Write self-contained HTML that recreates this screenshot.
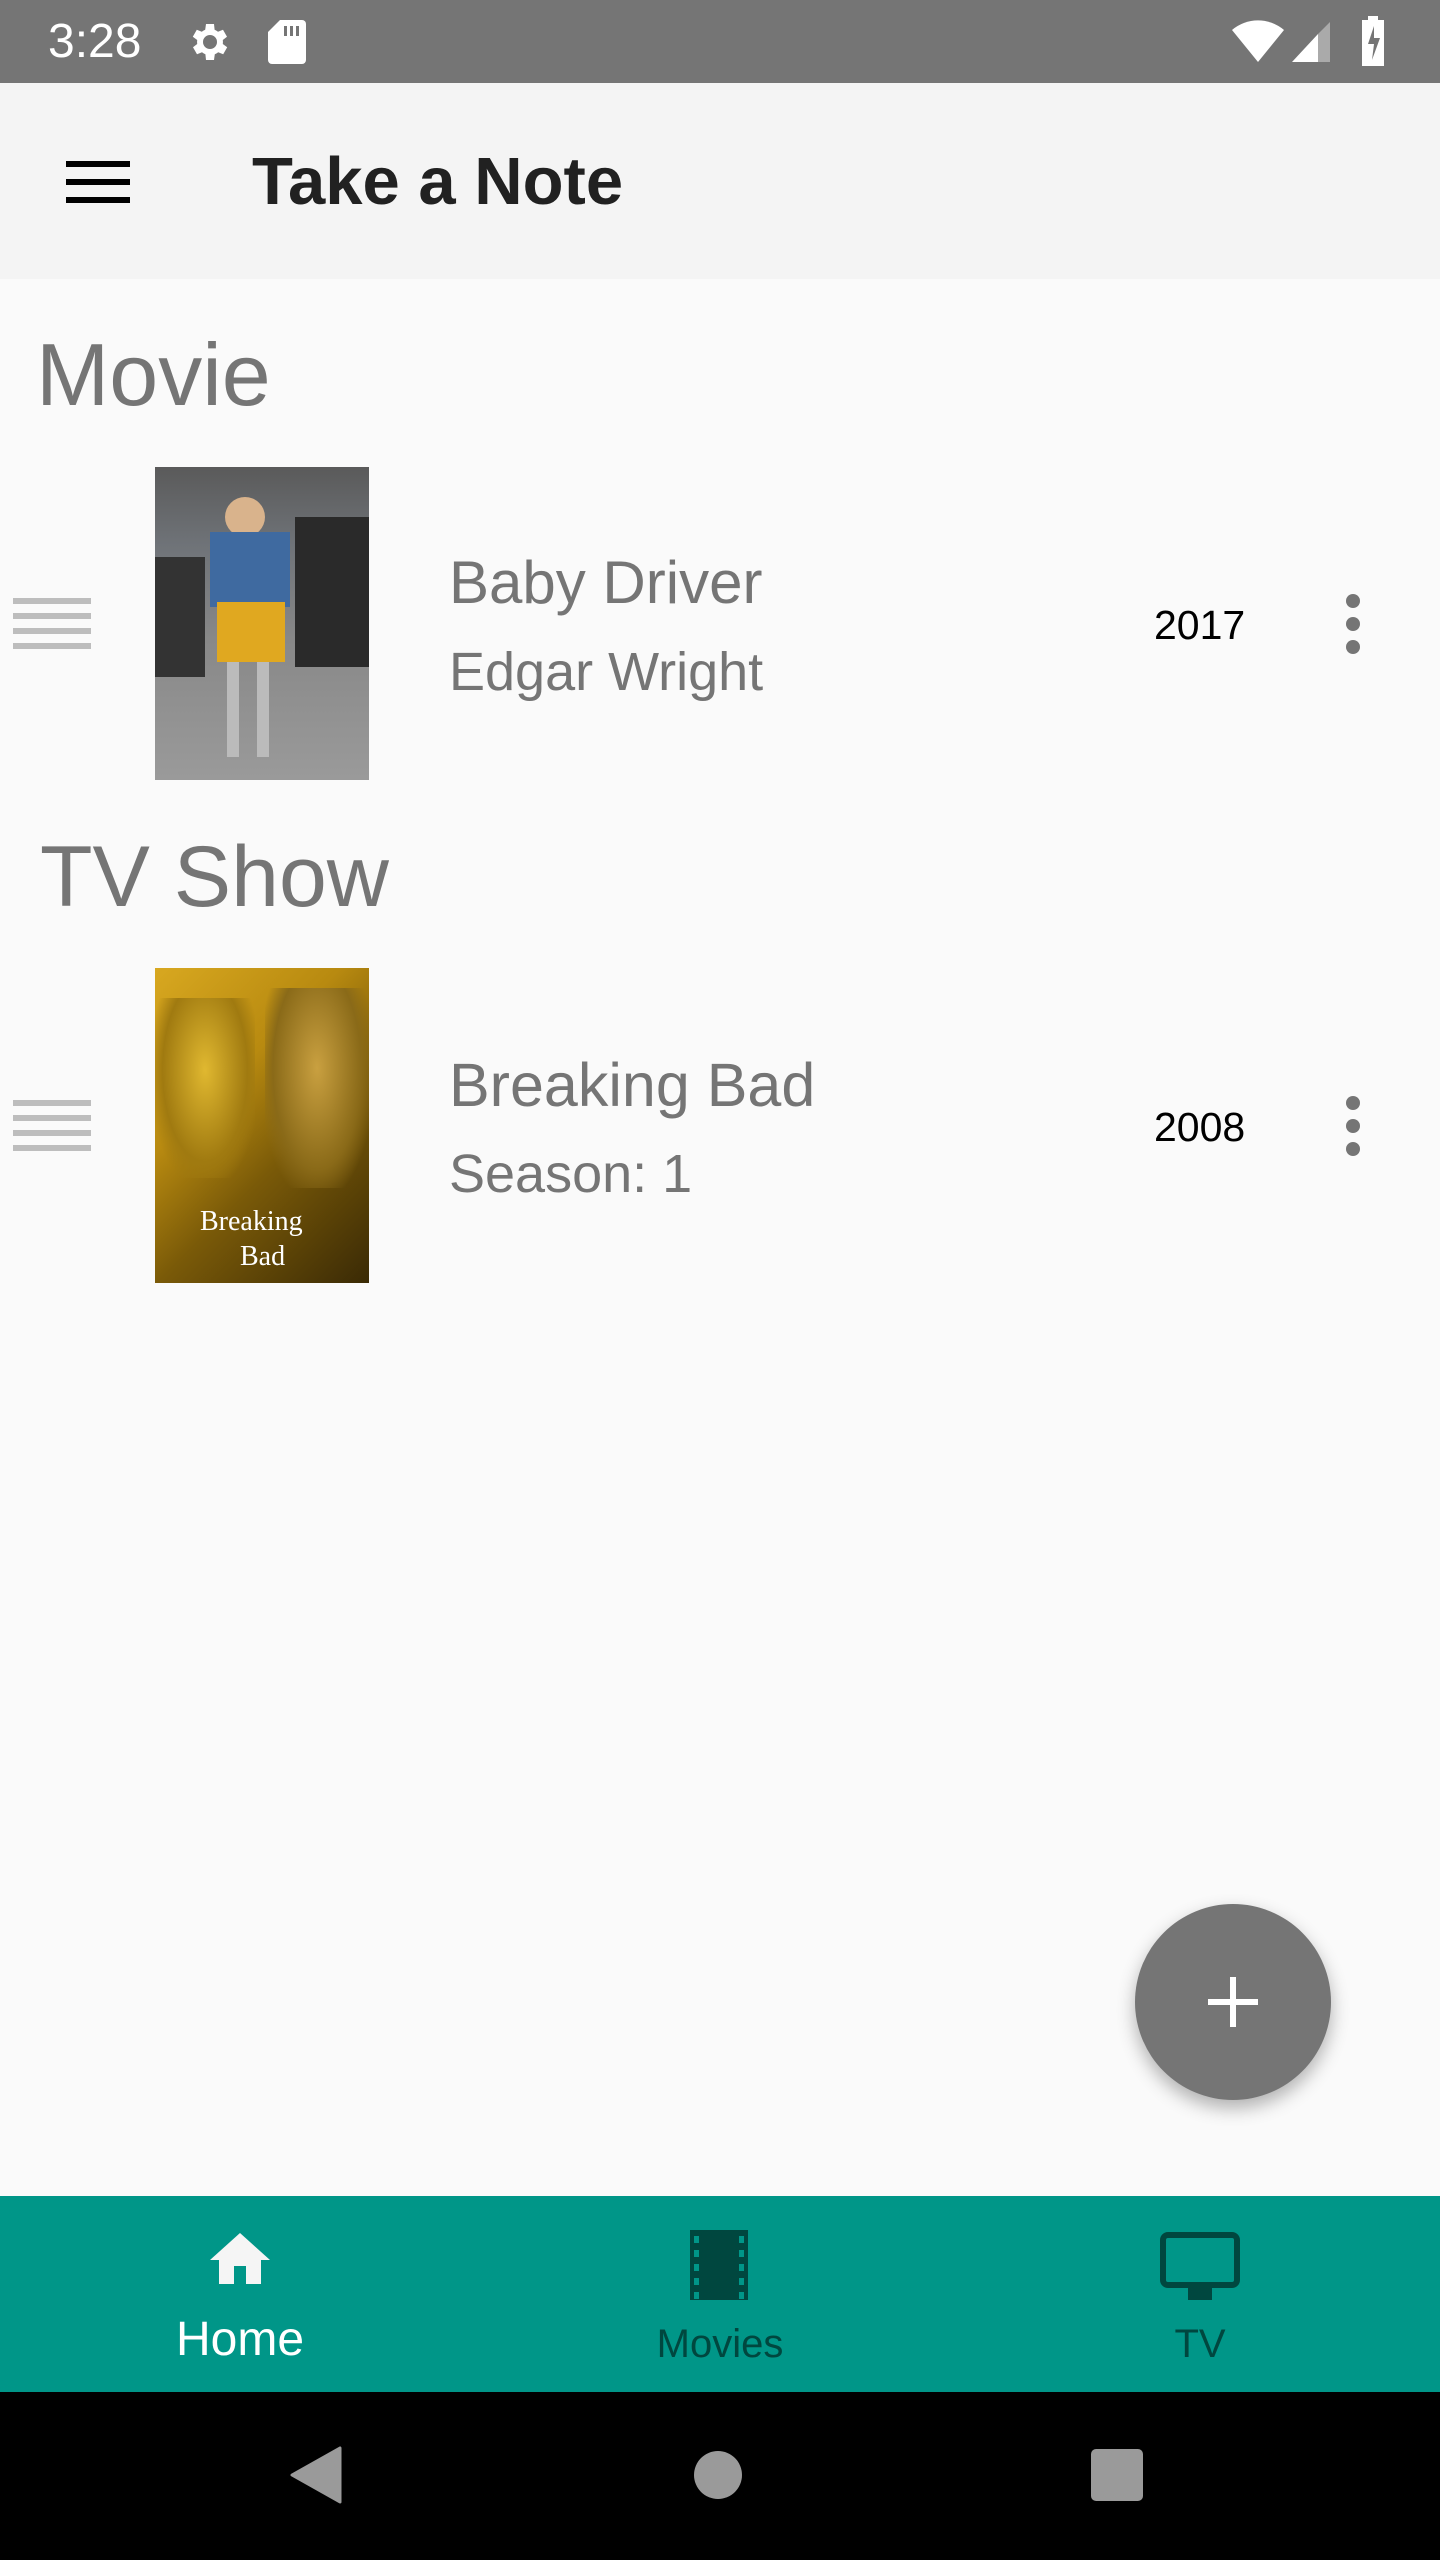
<!DOCTYPE html>
<html><head><meta charset="utf-8"><style>
*{margin:0;padding:0;box-sizing:border-box}
body{width:1440px;height:2560px;position:relative;background:#fafafa;font-family:"Liberation Sans",sans-serif;overflow:hidden}
.abs{position:absolute}
.t{white-space:nowrap;line-height:1}
</style></head><body>
<div class="abs" style="left:0;top:0;width:1440px;height:83px;background:#757575"></div>
<div class="abs t" style="left:48px;top:18px;font-size:48px;color:#fff">3:28</div>
<svg class="abs" style="left:184px;top:18px" width="48" height="48" viewBox="0 0 24 24"><path fill="#fff" d="M19.4 13a7.5 7.5 0 000-2l2.1-1.6-2-3.5-2.5 1a7 7 0 00-1.7-1L15 3h-4l-.4 2.9a7 7 0 00-1.7 1l-2.5-1-2 3.5L6.6 11a7.5 7.5 0 000 2l-2.1 1.6 2 3.5 2.5-1a7 7 0 001.7 1L11 21h4l.4-2.9a7 7 0 001.7-1l2.5 1 2-3.5zM13 15.5a3.5 3.5 0 110-7 3.5 3.5 0 010 7z"/></svg>
<svg class="abs" style="left:266px;top:18px" width="40" height="48" viewBox="0 0 20 24"><path fill="#fff" d="M7 1h11a2 2 0 012 2v18a2 2 0 01-2 2H3a2 2 0 01-2-2V7z"/><path fill="#757575" d="M9 4h1.5v5H9zM12 4h1.5v5H12zM15 4h1.5v5H15z"/></svg>
<svg class="abs" style="left:1230px;top:18px" width="56" height="48" viewBox="0 0 28 24"><path fill="#fff" d="M14 22L1 6a20 20 0 0126 0z"/></svg>
<svg class="abs" style="left:1290px;top:18px" width="44" height="48" viewBox="0 0 22 24"><path fill="#fff" d="M1 22L14 8v14z"/><path fill="#aaa" d="M14 8L20 2v20h-6z"/></svg>
<svg class="abs" style="left:1360px;top:16px" width="26" height="50" viewBox="0 0 13 25"><path fill="#fff" d="M4 0h5v2h3v23H1V2h3z"/><path fill="#757575" d="M7 5L4 14h3l-1 8 4-11H7z"/></svg>

<div class="abs" style="left:0;top:83px;width:1440px;height:196px;background:#f4f4f4"></div>
<div class="abs" style="left:66px;top:161px;width:64px;height:6px;background:#000"></div>
<div class="abs" style="left:66px;top:179px;width:64px;height:6px;background:#000"></div>
<div class="abs" style="left:66px;top:197px;width:64px;height:6px;background:#000"></div>
<div class="abs t" style="left:252px;top:148px;font-size:67px;font-weight:bold;color:#212121">Take a Note</div>

<div class="abs t" style="left:36px;top:331px;font-size:88px;color:#757575">Movie</div>
<div class="abs t" style="left:40px;top:834px;font-size:86px;color:#757575">TV Show</div>

<!-- row 1 -->
<div class="abs" style="left:13px;top:598px;width:78px;height:52px;background:repeating-linear-gradient(#bdbdbd 0 6px,transparent 6px 15px)"></div>
<div class="abs" style="left:155px;top:467px;width:214px;height:313px;background:linear-gradient(180deg,#5a5a5a 0%,#6f7378 25%,#888 55%,#9a9a9a 100%)">
<div class="abs" style="left:70px;top:30px;width:40px;height:40px;border-radius:50%;background:#d9b38c"></div>
<div class="abs" style="left:55px;top:65px;width:80px;height:75px;background:#3f6aa0"></div>
<div class="abs" style="left:62px;top:135px;width:68px;height:60px;background:#e0a820"></div>
<div class="abs" style="left:72px;top:195px;width:12px;height:95px;background:#bbb"></div>
<div class="abs" style="left:102px;top:195px;width:12px;height:95px;background:#bbb"></div>
<div class="abs" style="left:140px;top:50px;width:74px;height:150px;background:#2a2a2a"></div>
<div class="abs" style="left:0;top:90px;width:50px;height:120px;background:#333"></div>
</div>
<div class="abs t" style="left:449px;top:553px;font-size:60px;color:#757575">Baby Driver</div>
<div class="abs t" style="left:449px;top:645px;font-size:54px;color:#757575">Edgar Wright</div>
<div class="abs t" style="left:1154px;top:605px;font-size:41px;color:#000">2017</div>
<div class="abs" style="left:1346px;top:594px;width:14px;height:14px;border-radius:50%;background:#757575"></div>
<div class="abs" style="left:1346px;top:617px;width:14px;height:14px;border-radius:50%;background:#757575"></div>
<div class="abs" style="left:1346px;top:640px;width:14px;height:14px;border-radius:50%;background:#757575"></div>

<!-- row 2 -->
<div class="abs" style="left:13px;top:1100px;width:78px;height:52px;background:repeating-linear-gradient(#bdbdbd 0 6px,transparent 6px 15px)"></div>
<div class="abs" style="left:155px;top:968px;width:214px;height:315px;background:linear-gradient(135deg,#d8a820 0%,#b88a10 35%,#7a5a08 60%,#3a2a05 100%)">
<div class="abs" style="left:110px;top:20px;width:104px;height:200px;background:radial-gradient(ellipse at 50% 40%,#c9a040 0%,#8a6a18 60%,transparent 80%)"></div>
<div class="abs" style="left:0;top:30px;width:100px;height:180px;background:radial-gradient(ellipse at 50% 40%,#e0b830 0%,#a07a10 60%,transparent 80%)"></div>
<div class="abs t" style="left:45px;top:240px;font-size:28px;color:#fff;font-family:'Liberation Serif',serif">Breaking</div>
<div class="abs t" style="left:85px;top:275px;font-size:28px;color:#fff;font-family:'Liberation Serif',serif">Bad</div>
</div>
<div class="abs t" style="left:449px;top:1055px;font-size:61px;color:#757575">Breaking Bad</div>
<div class="abs t" style="left:449px;top:1147px;font-size:54px;color:#757575">Season: 1</div>
<div class="abs t" style="left:1154px;top:1107px;font-size:41px;color:#000">2008</div>
<div class="abs" style="left:1346px;top:1096px;width:14px;height:14px;border-radius:50%;background:#757575"></div>
<div class="abs" style="left:1346px;top:1119px;width:14px;height:14px;border-radius:50%;background:#757575"></div>
<div class="abs" style="left:1346px;top:1142px;width:14px;height:14px;border-radius:50%;background:#757575"></div>

<!-- FAB -->
<div class="abs" style="left:1135px;top:1904px;width:196px;height:196px;border-radius:50%;background:#757575;box-shadow:0 8px 18px rgba(0,0,0,.3)"></div>
<div class="abs" style="left:1208px;top:1999px;width:50px;height:6px;background:#fff"></div>
<div class="abs" style="left:1230px;top:1977px;width:6px;height:50px;background:#fff"></div>

<!-- bottom nav -->
<div class="abs" style="left:0;top:2196px;width:1440px;height:196px;background:#009688"></div>
<svg class="abs" style="left:204px;top:2224px" width="72" height="72" viewBox="0 0 24 24"><path fill="#f5f5f5" d="M10 20v-6h4v6h5v-8h3L12 3 2 12h3v8z"/></svg>
<div class="abs t" style="left:0;width:480px;top:2316px;text-align:center;font-size:48px;color:#fff">Home</div>
<svg class="abs" style="left:690px;top:2230px" width="58" height="70" viewBox="0 0 58 70"><path fill="#00473f" d="M0 0h58v70H0z"/><g fill="#009688"><rect x="4" y="6" width="5" height="7"/><rect x="4" y="20" width="5" height="7"/><rect x="4" y="34" width="5" height="7"/><rect x="4" y="48" width="5" height="7"/><rect x="4" y="62" width="5" height="7"/><rect x="49" y="6" width="5" height="7"/><rect x="49" y="20" width="5" height="7"/><rect x="49" y="34" width="5" height="7"/><rect x="49" y="48" width="5" height="7"/><rect x="49" y="62" width="5" height="7"/></g></svg>
<div class="abs t" style="left:480px;width:480px;top:2324px;text-align:center;font-size:40px;color:#00473f">Movies</div>
<svg class="abs" style="left:1160px;top:2232px" width="80" height="68" viewBox="0 0 80 68"><rect x="3" y="3" width="74" height="50" rx="5" fill="none" stroke="#00473f" stroke-width="6"/><rect x="28" y="54" width="24" height="14" fill="#00473f"/></svg>
<div class="abs t" style="left:960px;width:480px;top:2324px;text-align:center;font-size:40px;color:#00473f">TV</div>

<!-- system nav -->
<div class="abs" style="left:0;top:2392px;width:1440px;height:168px;background:#000"></div>
<svg class="abs" style="left:290px;top:2446px" width="52" height="58" viewBox="0 0 52 58"><path fill="#9a9a9a" d="M50 2v54L2 29z" stroke="#9a9a9a" stroke-width="3" stroke-linejoin="round"/></svg>
<div class="abs" style="left:694px;top:2451px;width:48px;height:48px;border-radius:50%;background:#9a9a9a"></div>
<div class="abs" style="left:1091px;top:2449px;width:52px;height:52px;border-radius:5px;background:#9a9a9a"></div>
</body></html>
